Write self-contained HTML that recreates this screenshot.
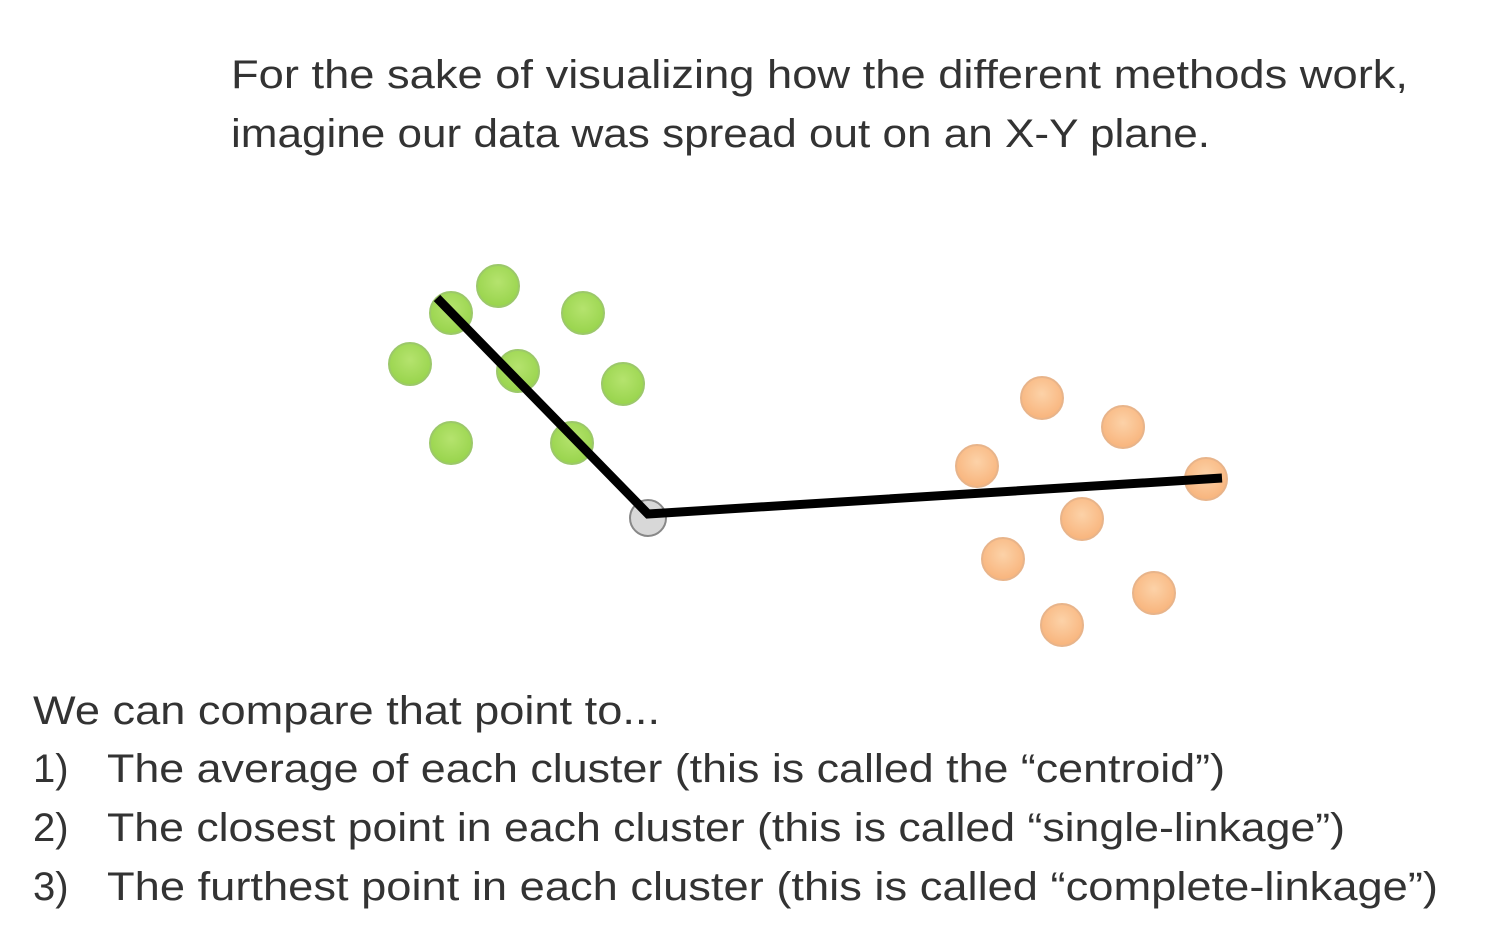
<!DOCTYPE html>
<html><head><meta charset="utf-8"><style>
html,body{margin:0;padding:0;background:#fff;}
svg{display:block}
text{font-family:"Liberation Sans",sans-serif;font-size:40px;fill:#333;}
</style></head><body>
<svg width="1505" height="949" viewBox="0 0 1505 949" xmlns="http://www.w3.org/2000/svg">
<defs>
<radialGradient id="g" cx="50%" cy="40%" r="60%"><stop offset="0" stop-color="#b5e36e"/><stop offset="1" stop-color="#98d44c"/></radialGradient>
<radialGradient id="o" cx="50%" cy="40%" r="60%"><stop offset="0" stop-color="#fcd2a8"/><stop offset="1" stop-color="#f8b47c"/></radialGradient>
</defs>
<text x="231" y="88" textLength="1177" lengthAdjust="spacingAndGlyphs">For the sake of visualizing how the different methods work,</text>
<text x="231" y="147" textLength="979" lengthAdjust="spacingAndGlyphs">imagine our data was spread out on an X-Y plane.</text>
<g fill="url(#g)" stroke="#9cc86a" stroke-width="2">
<circle cx="451" cy="313" r="21"/><circle cx="498" cy="286" r="21"/><circle cx="583" cy="313" r="21"/>
<circle cx="410" cy="364" r="21"/><circle cx="518" cy="371" r="21"/><circle cx="623" cy="384" r="21"/>
<circle cx="451" cy="443" r="21"/><circle cx="572" cy="443" r="21"/>
</g>
<g fill="url(#o)" stroke="#e8b48a" stroke-width="2">
<circle cx="1042" cy="398" r="21"/><circle cx="1123" cy="427" r="21"/><circle cx="977" cy="466" r="21"/>
<circle cx="1206" cy="479" r="21"/><circle cx="1082" cy="519" r="21"/><circle cx="1003" cy="559" r="21"/>
<circle cx="1154" cy="593" r="21"/><circle cx="1062" cy="625" r="21"/>
</g>
<circle cx="648" cy="518" r="18" fill="#d8d8d8" stroke="#888" stroke-width="2"/>
<polyline points="437,298 648,514 1222,478" fill="none" stroke="#000" stroke-width="9" stroke-linejoin="miter" stroke-linecap="butt"/>
<text x="33" y="724" textLength="627" lengthAdjust="spacingAndGlyphs">We can compare that point to...</text>
<text x="33" y="782">1)</text>
<text x="107" y="782" textLength="1118" lengthAdjust="spacingAndGlyphs">The average of each cluster (this is called the “centroid”)</text>
<text x="33" y="841">2)</text>
<text x="107" y="841" textLength="1238" lengthAdjust="spacingAndGlyphs">The closest point in each cluster (this is called “single-linkage”)</text>
<text x="33" y="900">3)</text>
<text x="107" y="900" textLength="1331" lengthAdjust="spacingAndGlyphs">The furthest point in each cluster (this is called “complete-linkage”)</text>
</svg>
</body></html>
